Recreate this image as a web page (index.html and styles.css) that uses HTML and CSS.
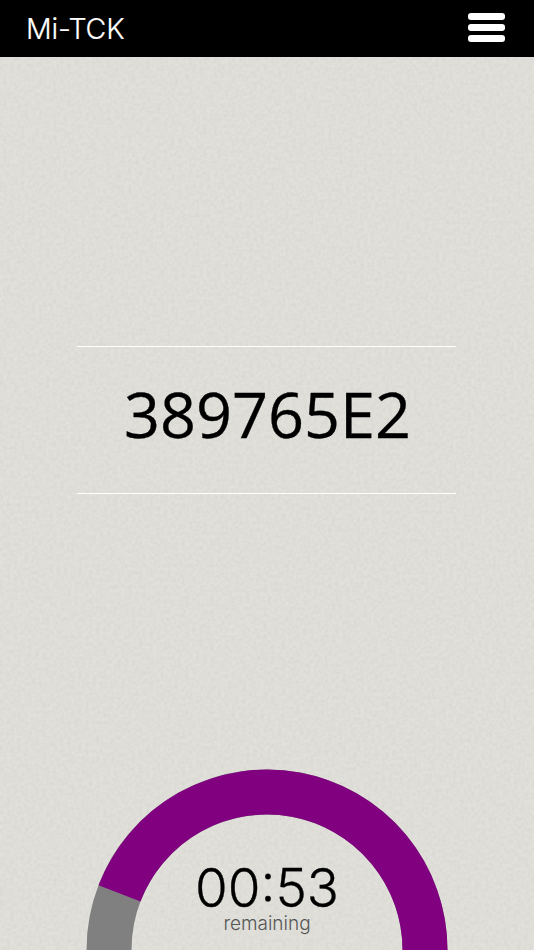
FILE: index.html
```html
<!DOCTYPE html>
<html lang="en">
<head>
<meta charset="utf-8">
<title>Mi-TCK</title>
<link rel="stylesheet" href="styles.css">
</head>
<body>
<svg class="texture" aria-hidden="true">
  <filter id="paper" x="0" y="0" width="100%" height="100%">
    <feTurbulence type="fractalNoise" baseFrequency="0.28" numOctaves="3" seed="4"/>
    <feColorMatrix type="matrix" values="0 0 0 0 0.6  0 0 0 0 0.6  0 0 0 0 0.56  0.7 0 0 0 -0.22"/>
  </filter>
  <rect width="100%" height="100%" filter="url(#paper)"/>
</svg>
<header class="topbar">
  <h1 class="brand">Mi-TCK</h1>
  <svg class="menu" viewBox="0 0 37 29" aria-label="Menu">
    <rect y="0" width="37" height="7" rx="3"/>
    <rect y="11" width="37" height="7" rx="3"/>
    <rect y="22" width="37" height="7" rx="3"/>
  </svg>
</header>
<main class="content">
  <div class="code">389765E2</div>
  <section class="timer">
    <svg class="ring" viewBox="0 0 362 362">
      <circle class="ring-track" cx="181" cy="181" r="158"/>
      <path class="ring-progress" d="M33.5 124.4A158 158 0 0 1 339 181A158 158 0 0 1 181 339"/>
    </svg>
    <div class="readout">
      <div class="time">00:53</div>
      <div class="label">remaining</div>
    </div>
  </section>
</main>
</body>
</html>
```
FILE: styles.css
```css
html, body {
  margin: 0;
  height: 950px;
  overflow: hidden;
}
body {
  position: relative;
  background: #e1e0db;
  font-family: "Inter", "Liberation Sans", sans-serif;
  display: flex;
  flex-direction: column;
}
.texture {
  position: absolute;
  inset: 0;
  width: 100%;
  height: 100%;
}
.topbar {
  position: relative;
  flex: none;
  height: 57px;
  background: #000;
  display: flex;
  align-items: center;
  justify-content: space-between;
  padding: 0 29px 0 26px;
}
.brand {
  margin: 0;
  color: #fff;
  font-size: 28.5px;
  font-weight: 300;
  letter-spacing: -0.2px;
  -webkit-text-stroke: 0.2px #fff;
}
.menu {
  width: 37px;
  height: 29px;
  margin-bottom: 2px;
  fill: #fff;
}
.content {
  position: relative;
  flex: 1;
  min-height: 0;
  display: flex;
  flex-direction: column;
  align-items: center;
  padding-top: 289px;
}
.code {
  box-sizing: border-box;
  width: 379px;
  height: 148px;
  margin-right: 1px;
  padding: 0 0 14px 2px;
  border-top: 1px solid #fff;
  border-bottom: 1px solid #fff;
  display: flex;
  align-items: center;
  justify-content: center;
  font-family: "Open Sans", "Noto Sans", sans-serif;
  font-size: 63px;
  color: #000;
  -webkit-text-stroke: 0.3px #000;
}
.timer {
  position: relative;
  flex: none;
  width: 362px;
  height: 181px;
  margin-top: 275px;
  overflow: hidden;
}
.ring {
  display: block;
  width: 362px;
  height: 362px;
  fill: none;
  stroke-width: 45;
}
.ring-track {
  stroke: #808080;
}
.ring-progress {
  stroke: #800080;
}
.readout {
  position: absolute;
  top: 92px;
  left: 0;
  right: 0;
  text-align: center;
}
.time {
  font-size: 53px;
  font-weight: 300;
  line-height: 54px;
  color: #000;
  -webkit-text-stroke: 0.3px #000;
}
.label {
  margin-top: -2px;
  font-size: 19px;
  font-weight: 300;
  line-height: 22px;
  color: #555;
}
```
